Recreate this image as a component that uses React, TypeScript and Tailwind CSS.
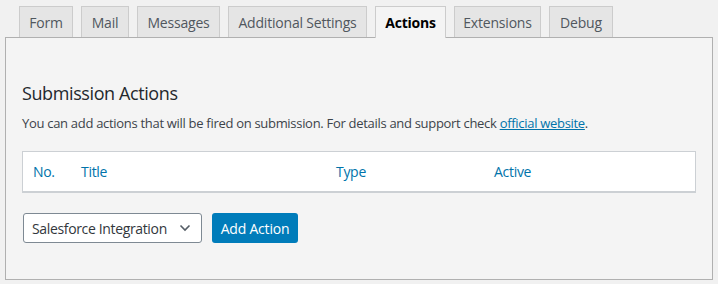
import React from 'react'

const tabs = [
  { label: 'Form', w: 'w-[54px]' },
  { label: 'Mail', w: 'w-[48px]' },
  { label: 'Messages', w: 'w-[83px]' },
  { label: 'Additional Settings', w: 'w-[139px]' },
  { label: 'Actions', w: 'w-[71px]', active: true },
  { label: 'Extensions', w: 'w-[87px]' },
  { label: 'Debug', w: 'w-[64px]' },
]

const font = { fontFamily: '"Open Sans", "Noto Sans", sans-serif' }

const App = () => {
  return (
    <div className="w-[718px] h-[284px] bg-[#f1f1f1] pt-[6px] pl-[5px] text-[#23282d]" style={font}>
      <div className="flex gap-[8px] pl-[14px] relative z-10">
        {tabs.map((t) => (
          <div
            key={t.label}
            className={
              t.active
                ? `${t.w} h-[32px] -mb-px flex items-center justify-center border border-b-0 border-[#ccc] bg-[#f4f4f4] text-[14px] font-bold text-black tracking-[-0.2px]`
                : `${t.w} h-[31px] flex items-center justify-center border border-b-0 border-[#ccc] bg-[#e5e5e5] text-[14px] text-[#50575e] tracking-[-0.2px]`
            }
          >
            {t.label}
          </div>
        ))}
      </div>

      <div className="w-[708px] h-[243px] border border-[#b0b0b0] bg-[#f4f4f4] pl-[16px] pr-[15px]">
        <h2 className="mt-[43px] text-[18px] leading-[24px] text-[#23282d] tracking-[-0.4px]">Submission Actions</h2>
        <p className="mt-[9px] text-[13px] leading-[18px] text-[#3c434a] tracking-[-0.3px]">
          You can add actions that will be fired on submission. For details and support check{' '}
          <a href="#" className="text-[#0073aa] underline">official website</a>.
        </p>

        <div className="mt-[19px] w-[674px] h-[41px] bg-white border border-[#ccd0d4] shadow-[0_1px_0_#ccd0d4] flex items-center text-[14px] text-[#0073aa] tracking-[-0.3px]">
          <span className="w-[58px] pl-[10px]">No.</span>
          <span className="w-[255px]">Title</span>
          <span className="w-[158px]">Type</span>
          <span>Active</span>
        </div>

        <div className="mt-[21px] flex items-center gap-[10px] pl-[1px]">
          <div className="w-[179px] h-[30px] border border-[#7e8993] rounded-[3px] bg-white flex items-center justify-between pl-[8px] pr-[10px] text-[14px] text-[#32373c] tracking-[-0.35px]">
            <span>Salesforce Integration</span>
            <svg width="12" height="8" viewBox="0 0 12 8" fill="none">
              <path d="M1.5 1.5 L6 6 L10.5 1.5" stroke="#555d66" strokeWidth="1.6" />
            </svg>
          </div>
          <button className="w-[86px] h-[30px] rounded-[3px] bg-[#007cba] text-white text-[14px] tracking-[-0.2px]">
            Add Action
          </button>
        </div>
      </div>
    </div>
  )
}

export default App
